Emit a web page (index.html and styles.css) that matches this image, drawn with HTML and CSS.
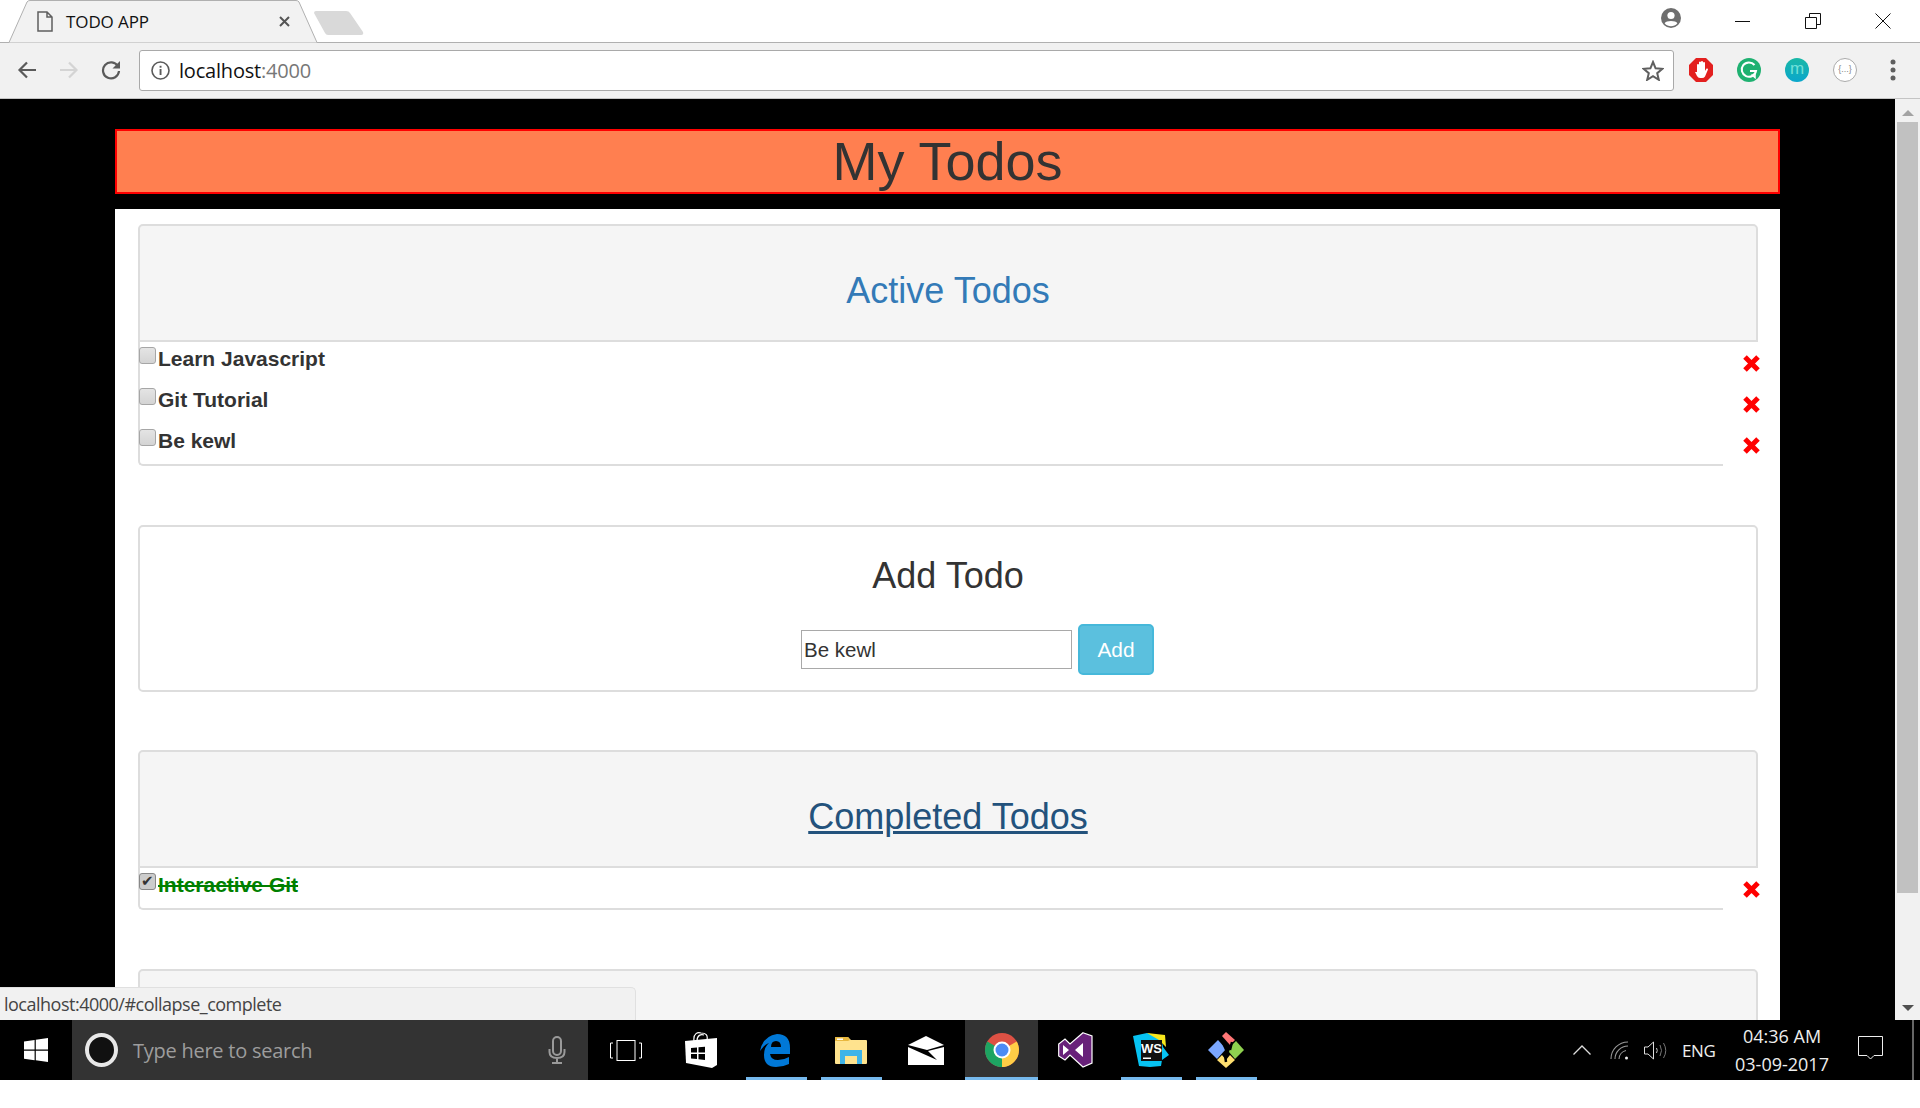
FILE: index.html
```html
<!DOCTYPE html>
<html lang="en">
<head>
    <meta charset="UTF-8">
    <title>TODO APP</title>
    <link rel="stylesheet" href="styles.css">
</head>
<body>
    <!-- browser chrome -->
    <div class="tabstrip">
        <div class="tab">
            <svg class="tab-shape" width="310" height="43" viewBox="0 0 310 43"><path d="M0 42.5H1L19 2Q20 .5 22 .5H288Q290 .5 291 2L309 42.5H310" fill="#f2f2f2" stroke="#b0b0b0"/></svg>
            <svg class="tab-file" width="16" height="21" viewBox="0 0 16 21"><path d="M1 1H10L15 6V20H1Z M10 1V6H15" fill="none" stroke="#5f5f5f" stroke-width="1.5"/></svg>
            <span class="tab-title">TODO APP</span>
            <svg class="tab-close" width="11" height="11" viewBox="0 0 11 11"><path d="M1 1L10 10M10 1L1 10" stroke="#555" stroke-width="2"/></svg>
        </div>
        <svg class="newtab" width="50" height="26" viewBox="0 0 50 26"><path d="M2 1H32Q35 1 36 3L49 22Q50 25 47 25H14Q12 25 11 23L0 3Q0 1 2 1Z" fill="#d9d9d9"/></svg>
        <div class="window-controls">
            <svg class="profile" width="20" height="20" viewBox="0 0 20 20"><circle cx="10" cy="10" r="10" fill="#6e6e6e"/><circle cx="10" cy="7.5" r="3.6" fill="#fff"/><path d="M3.6 15.2C5 12.4 15 12.4 16.4 15.2 14.6 17.4 12.4 18.2 10 18.2S5.400 17.400 3.600 15.200Z" fill="#fff"/></svg>
            <div class="win-btn"><svg width="16" height="16" viewBox="0 0 16 16"><path d="M0 8.500H15" stroke="#111"/></svg></div>
            <div class="win-btn"><svg width="16" height="16" viewBox="0 0 16 16"><path d="M.5 4.500H11.500V15.500H.5Z M4.500 4.500V.5H15.500V11.500H11.500" fill="none" stroke="#111"/></svg></div>
            <div class="win-btn"><svg width="16" height="16" viewBox="0 0 16 16"><path d="M.5 .5L15.500 15.500M15.500 .5L.5 15.500" stroke="#111"/></svg></div>
        </div>
    </div>

    <div class="toolbar">
        <svg class="nav-icon" width="20" height="20" viewBox="0 0 20 20"><path d="M19 10H3M10 2.500L2.500 10L10 17.500" fill="none" stroke="#5a5a5a" stroke-width="2.200"/></svg>
        <svg class="nav-icon" width="20" height="20" viewBox="0 0 20 20"><path d="M1 10H17M10 2.500L17.500 10L10 17.500" fill="none" stroke="#d4d4d4" stroke-width="2.200"/></svg>
        <svg class="nav-icon" width="20" height="20" viewBox="0 0 20 20"><path d="M17 6.500A8 8 0 1 0 18 11" fill="none" stroke="#5a5a5a" stroke-width="2.200"/><path d="M19 1V8.500H11.500Z" fill="#5a5a5a"/></svg>
        <div class="omnibox">
            <svg class="info" width="19" height="19" viewBox="0 0 19 19"><circle cx="9.500" cy="9.500" r="8.500" fill="none" stroke="#5a5a5a" stroke-width="1.600"/><rect x="8.600" y="8" width="1.900" height="6" fill="#5a5a5a"/><rect x="8.600" y="4.800" width="1.900" height="1.900" fill="#5a5a5a"/></svg>
            <span class="url">localhost<span class="url-port">:4000</span></span>
            <svg class="star" width="22" height="21" viewBox="0 0 22 21"><path d="M11 2L13.600 8.300L20.400 8.800L15.200 13.200L16.800 19.800L11 16.200L5.200 19.800L6.800 13.200L1.600 8.800L8.400 8.300Z" fill="none" stroke="#5f5f5f" stroke-width="2"/></svg>
        </div>
        <div class="ext">
            <svg width="24" height="24" viewBox="0 0 24 24"><path d="M7 0H17L24 7V17L17 24H7L0 17V7Z" fill="#e3201f"/><path d="M8 14V6.500Q9 5.500 10 6.500V4Q11 3 12 4V3.500Q13 2.500 14 3.500V4.500Q15 3.500 16 4.500V13L17.500 10.500Q19 10 19 11.500L16 18.500Q15 20 13 20H11Q9 20 8 18L6 14Z" fill="#fff"/></svg>
        </div>
        <div class="ext">
            <svg width="24" height="24" viewBox="0 0 24 24"><circle cx="12" cy="12" r="12" fill="#1fb171"/><path d="M17.500 7A7.200 7.200 0 1 0 19 13H13" fill="none" stroke="#fff" stroke-width="2"/><path d="M14.500 16.500L18 19.500V15.500" fill="none" stroke="#fff" stroke-width="1.500"/></svg>
        </div>
        <div class="ext"><span class="ext-m">m</span></div>
        <div class="ext"><span class="ext-json">{...}</span></div>
        <div class="ext">
            <svg width="6" height="22" viewBox="0 0 6 22"><circle cx="3" cy="3" r="2.500" fill="#5f5f5f"/><circle cx="3" cy="11" r="2.500" fill="#5f5f5f"/><circle cx="3" cy="19" r="2.500" fill="#5f5f5f"/></svg>
        </div>
    </div>

    <!-- page -->
    <div class="viewport">
        <div class="page">
            <h1 class="app-title">My Todos</h1>
            <div class="wrapper">
                <section class="panel">
                    <div class="panel-heading">
                        <h3 class="panel-title"><a href="#collapse_active">Active Todos</a></h3>
                    </div>
                    <ul class="todo-list">
                        <li class="todo-row">
                            <label class="todo-label"><input type="checkbox" class="todo-check"><span>Learn Javascript</span></label>
                            <svg class="remove" width="17" height="17" viewBox="0 0 17 17"><path d="M2 2L15 15M15 2L2 15" stroke="#f00" stroke-width="5"/></svg>
                        </li>
                        <li class="todo-row">
                            <label class="todo-label"><input type="checkbox" class="todo-check"><span>Git Tutorial</span></label>
                            <svg class="remove" width="17" height="17" viewBox="0 0 17 17"><path d="M2 2L15 15M15 2L2 15" stroke="#f00" stroke-width="5"/></svg>
                        </li>
                        <li class="todo-row">
                            <label class="todo-label"><input type="checkbox" class="todo-check"><span>Be kewl</span></label>
                            <svg class="remove" width="17" height="17" viewBox="0 0 17 17"><path d="M2 2L15 15M15 2L2 15" stroke="#f00" stroke-width="5"/></svg>
                        </li>
                    </ul>
                </section>

                <section class="panel add-panel">
                    <h3 class="add-title">Add Todo</h3>
                    <form class="add-form">
                        <input type="text" class="add-input" value="Be kewl">
                        <button type="button" class="add-btn">Add</button>
                    </form>
                </section>

                <section class="panel">
                    <div class="panel-heading">
                        <h3 class="panel-title"><a href="#collapse_complete" class="hovered">Completed Todos</a></h3>
                    </div>
                    <ul class="todo-list">
                        <li class="todo-row done">
                            <label class="todo-label"><input type="checkbox" class="todo-check" checked><span>Interactive Git</span></label>
                            <svg class="remove" width="17" height="17" viewBox="0 0 17 17"><path d="M2 2L15 15M15 2L2 15" stroke="#f00" stroke-width="5"/></svg>
                        </li>
                    </ul>
                </section>

                <section class="panel">
                    <div class="panel-heading"></div>
                </section>
            </div>
        </div>
        <div class="scrollbar">
            <span class="arrow-up"></span>
            <div class="thumb"></div>
            <span class="arrow-down"></span>
        </div>
        <div class="status-bubble">localhost:4000/#collapse_complete</div>
    </div>

    <!-- windows taskbar -->
    <div class="taskbar">
        <div class="start">
            <svg width="24" height="24" viewBox="0 0 24 24"><path d="M0 3.400L10.600 2V11.500H0Z M11.800 1.800L24 0V11.500H11.800Z M0 12.700H10.600V22.200L0 20.700Z M11.800 12.700H24V24L11.800 22.300Z" fill="#fff"/></svg>
        </div>
        <div class="search">
            <span class="cortana"></span>
            <span class="search-text">Type here to search</span>
            <svg class="mic" width="18" height="28" viewBox="0 0 18 28"><rect x="5" y="1" width="8" height="18" rx="4" fill="none" stroke="#9a9a9a" stroke-width="2"/><path d="M1.500 13V16Q1.500 22 9 22T16.500 16V13M9 22V26M4 27H14" fill="none" stroke="#9a9a9a" stroke-width="2"/></svg>
        </div>
        <div class="slot">
            <svg width="32" height="21" viewBox="0 0 32 21"><path d="M3 3H.5V18H3M29 3H31.500V18H29" fill="none" stroke="#fff"/><rect x="7" y=".5" width="18" height="20" fill="none" stroke="#fff"/></svg>
        </div>
        <div class="slot">
            <svg width="32" height="36" viewBox="0 0 32 36"><path d="M9 9C8 1 13 0 16 1C21 1 23 3 22 8M12 9C12 3 16 2 19 3" fill="none" stroke="#fff" stroke-width="1.200"/><path d="M0 9L32 6V33L27 36L1 31Z" fill="#fff"/><path d="M6 16L12 15.500V20.500H6Z M13.500 15.300L20 14.700V20.500H13.500Z M6 22H12V27L6 26.500Z M13.500 22H20V28L13.500 27.300Z" fill="#000"/></svg>
        </div>
        <div class="slot open">
            <svg width="31" height="33" viewBox="0 0 31 33"><path d="M30 20H10Q11 26 18 26Q24 26 29 23V30Q23 33 16 33Q4 33 4 21Q4 13 9 9Q5 10 0 17Q3 2 17 0Q30 0 30 14ZM11 13H21Q21 7 16 7Q11 7 11 13Z" fill="#0078d7"/></svg>
        </div>
        <div class="slot open">
            <svg width="32" height="27" viewBox="0 0 32 27"><path d="M1 0H13L16 3H31Q32 3 32 4V26Q32 27 31 27H1Q0 27 0 26V1Q0 0 1 0Z" fill="#ffe38e"/><path d="M0 4H13L15 3L13 0H1Q0 0 0 1Z" fill="#e9b83f"/><rect x="2" y="1.500" width="6" height="1.500" fill="#fff"/><path d="M5 13H27V27H22V19H10V27H5Z" fill="#3fb4e8"/></svg>
        </div>
        <div class="slot">
            <svg width="36" height="29" viewBox="0 0 36 29"><path d="M0 9L18 0L36 9L19 14Z" fill="#fff"/><path d="M0 11L29 24L20 15L36 11V29H0Z" fill="#fff"/></svg>
        </div>
        <div class="slot open active">
            <svg width="34" height="34" viewBox="0 0 34 34"><circle cx="17" cy="17" r="17" fill="#dd5144"/><path d="M17 17L2.300 8.500A17 17 0 0 0 17 34Z" fill="#1da462"/><path d="M17 17L31.700 8.500A17 17 0 0 1 17 34Z" fill="#ffcd46"/><circle cx="17" cy="17" r="8.500" fill="#fff"/><circle cx="17" cy="17" r="6.500" fill="#4c8bf5"/></svg>
        </div>
        <div class="slot">
            <svg width="35" height="36" viewBox="0 0 35 36"><path d="M25 .7L34 4V31L25 35L12 23L7 28L.7 24V12L7 7L12 12Z" fill="#68217a" stroke="#fff" stroke-width="1.200"/><path d="M25 11V25L17 18Z M5 13V23L11 18Z" fill="#fff"/></svg>
        </div>
        <div class="slot open">
            <svg width="36" height="34" viewBox="0 0 36 34"><path d="M0 3L14 0L28 4L30 14L36 22L29 27L28 33L17 34L6 33Z" fill="#07c3f2"/><path d="M14 0L32 2L33 14L26 7Z" fill="#f8e71c"/><rect x="8" y="7" width="21" height="21" fill="#111"/><text x="18.500" y="20" class="ws-text">WS</text><rect x="10" y="24.500" width="8" height="1.500" fill="#fff"/></svg>
        </div>
        <div class="slot open">
            <svg width="36" height="36" viewBox="0 0 36 36"><path d="M14 4L18 0L27 8L22 13Z" fill="#ff7676"/><path d="M0 18L10 8L18 17L9 27Z" fill="#7ba7ff"/><path d="M23 14L28 9L36 18L27 27L21 20Z" fill="#8fd14f"/><path d="M9 28L14 23L18 28L22 23L27 28L18 36Z" fill="#ffdf70"/><path d="M12 4L20 22M17 23L18 30M24 10L22 18" stroke="#000" stroke-width="2.500" fill="none"/></svg>
        </div>
        <div class="tray">
            <svg class="tray-chevron" width="18" height="10" viewBox="0 0 18 10"><path d="M.5 9.500L9 1L17.500 9.500" fill="none" stroke="#ddd" stroke-width="1.300"/></svg>
            <svg class="tray-wifi" width="19" height="19" viewBox="0 0 19 19"><path d="M1 18A17 17 0 0 1 18 1M5 18A13 13 0 0 1 18 5M9 18A9 9 0 0 1 16 9.500" fill="none" stroke="#999" stroke-width="1.100"/><circle cx="16.500" cy="17" r="1.500" fill="#eee"/></svg>
            <svg class="tray-sound" width="23" height="19" viewBox="0 0 23 19"><path d="M.5 6H4L9.500 1V18L4 13H.5Z" fill="none" stroke="#ddd"/><path d="M12.500 7Q14 9.500 12.500 12" fill="none" stroke="#ccc"/><path d="M16 4Q19 9.500 16 15M19.500 2Q24 9.500 19.500 17" fill="none" stroke="#777"/></svg>
            <span class="tray-lang">ENG</span>
            <div class="clock"><span>04:36 AM</span><span>03-09-2017</span></div>
            <svg class="notify" width="25" height="25" viewBox="0 0 25 25"><path d="M.5 .5H24.500V19.500H16L12.500 23L9 19.500H.5Z" fill="none" stroke="#eee"/></svg>
            <span class="show-desktop"></span>
        </div>
    </div>
    <div class="below-shot"></div>
</body>
</html>
```

FILE: styles.css
```css
* {
    box-sizing: border-box;
}

html, body {
    height: 100%;
}

body {
    margin: 0;
    display: flex;
    flex-direction: column;
    height: 1108px;
    overflow: hidden;
    background: #fff;
    font-family: "Liberation Sans", Arial, sans-serif;
    color: #333;
}

/* browser chrome */
.tabstrip {
    display: flex;
    align-items: flex-start;
    height: 43px;
    flex: none;
    background: #fff;
    border-bottom: 1px solid #b0b0b0;
    font-family: "Open Sans", sans-serif;
}

.tab {
    position: relative;
    display: flex;
    align-items: center;
    width: 310px;
    height: 43px;
    margin-left: 8px;
    padding-left: 29px;
}

.tab-shape {
    position: absolute;
    left: 0;
    top: 0;
}

.tab-file,
.tab-title,
.tab-close {
    position: relative;
}

.tab-title {
    margin-left: 13px;
    width: 213px;
    font-size: 17px;
    letter-spacing: -0.1px;
    color: #111;
}

.newtab {
    margin: 10px 0 0 -4px;
}

.window-controls {
    display: flex;
    align-items: center;
    margin-left: auto;
    padding-right: 2px;
}

.profile {
    margin: 0 27px 6px 0;
}

.win-btn {
    display: flex;
    align-items: center;
    justify-content: center;
    width: 70px;
    height: 42px;
}

.toolbar {
    display: flex;
    align-items: center;
    height: 56px;
    flex: none;
    padding: 0 3px 1px 17px;
    background: #f1f1f1;
    border-bottom: 1px solid #c4c4c4;
}

.nav-icon {
    margin-right: 22px;
}

.nav-icon:nth-child(3) {
    margin-right: 18px;
}

.omnibox {
    display: flex;
    align-items: center;
    flex: 1;
    height: 41px;
    margin-right: 3px;
    padding: 0 9px 0 11px;
    background: #fff;
    border: 1px solid #a9a9a9;
    border-radius: 3px;
    font-family: "Open Sans", sans-serif;
}

.url {
    margin-left: 9px;
    font-size: 20px;
    letter-spacing: -0.2px;
    color: #111;
}

.url-port {
    color: #777;
}

.star {
    margin-left: auto;
}

.ext {
    display: flex;
    align-items: center;
    justify-content: center;
    width: 48px;
}

.ext-m {
    display: block;
    width: 24px;
    height: 24px;
    border-radius: 50%;
    background: linear-gradient(#19b8a6, #0aa6cc);
    color: #6fe0d8;
    font-size: 17px;
    line-height: 22px;
    text-align: center;
}

.ext-json {
    display: block;
    width: 24px;
    height: 24px;
    border-radius: 50%;
    background: #fff;
    border: 1px solid #aaa;
    color: #888;
    font-size: 9px;
    line-height: 21px;
    text-align: center;
}

/* page */
.viewport {
    position: relative;
    display: flex;
    flex: none;
    height: 921px;
    overflow: hidden;
    background: #000;
}

.page {
    flex: 1;
    padding: 30px 115px 0;
    overflow: hidden;
}

.app-title {
    height: 65px;
    margin: 0 0 15px;
    background: #ff7f50;
    border: 2px solid #f00;
    font-size: 54px;
    font-weight: normal;
    line-height: 61px;
    text-align: center;
}

.wrapper {
    padding: 15px 22px 60px 23px;
    background: #fff;
}

.panel {
    margin-bottom: 59px;
}

.panel-heading {
    height: 118px;
    padding-top: 44px;
    background: #f5f5f5;
    border: 2px solid #ddd;
    border-radius: 5px 5px 0 0;
}

.panel-title {
    margin: 0;
    font-size: 36px;
    font-weight: normal;
    line-height: 41px;
    text-align: center;
}

.panel-title a {
    color: #337ab7;
    text-decoration: none;
}

.panel-title a.hovered {
    color: #23527c;
    text-decoration: underline;
}

.todo-list {
    width: 1585px;
    margin: 0;
    padding: 0;
    list-style: none;
    border-left: 2px solid #ddd;
    border-bottom: 2px solid #ddd;
    border-radius: 0 0 0 5px;
}

.todo-row {
    display: flex;
    justify-content: space-between;
    height: 41px;
}

.todo-row:last-child {
    height: 40px;
}

.todo-label {
    display: flex;
    align-items: flex-start;
    font-size: 21px;
    font-weight: bold;
    line-height: 24px;
    padding-top: 5px;
}

.todo-check {
    appearance: none;
    position: relative;
    width: 17px;
    height: 17px;
    margin: 0 2px 0 -1px;
    background: linear-gradient(#e4e4e4, #d4d4d4);
    border: 1px solid #a6a6a6;
    border-radius: 3px;
}

.todo-check:checked {
    background: #ccc;
    border-color: #888;
}

.todo-check:checked::after {
    content: "\2714";
    position: absolute;
    left: 1px;
    top: -2px;
    font-family: "DejaVu Sans", sans-serif;
    font-size: 15px;
    line-height: 18px;
    color: #333;
}

.done .todo-label {
    color: #008000;
    text-decoration: line-through;
}

.remove {
    margin: 13px -37px 0 0;
}

.add-panel {
    height: 167px;
    margin-bottom: 58px;
    padding-top: 29px;
    border: 2px solid #ddd;
    border-radius: 5px;
}

.add-title {
    margin: 0 0 28px;
    font-size: 36px;
    font-weight: normal;
    line-height: 40px;
    text-align: center;
}

.add-form {
    display: flex;
    align-items: center;
    justify-content: center;
    gap: 6px;
    padding-left: 59px;
}

.add-input {
    width: 271px;
    height: 39px;
    padding: 0 2px;
    background: #fff;
    border: 1px solid #a9a9a9;
    font-family: inherit;
    font-size: 20.5px;
    color: #333;
}

.add-btn {
    width: 76px;
    height: 51px;
    background: #5bc0de;
    border: 2px solid #46b8da;
    border-radius: 5px;
    font-family: inherit;
    font-size: 20.8px;
    color: #fff;
}

.scrollbar {
    display: flex;
    flex-direction: column;
    align-items: center;
    flex: none;
    width: 25px;
    background: #f1f1f1;
}

.thumb {
    width: 21px;
    height: 771px;
    margin-top: 6px;
    background: #c1c1c1;
}

.arrow-up,
.arrow-down {
    width: 0;
    height: 0;
    border-left: 6px solid transparent;
    border-right: 6px solid transparent;
}

.arrow-up {
    margin-top: 11px;
    border-bottom: 6px solid #a3a3a3;
}

.arrow-down {
    margin-top: auto;
    margin-bottom: 9px;
    border-top: 6px solid #505050;
}

.status-bubble {
    position: absolute;
    left: 0;
    bottom: 0;
    width: 636px;
    height: 33px;
    padding-left: 4px;
    background: #f1f1f1;
    border: 1px solid #e0e0e0;
    border-left: 0;
    border-bottom: 0;
    border-radius: 0 5px 0 0;
    font-family: "Open Sans", sans-serif;
    font-size: 18px;
    letter-spacing: -0.5px;
    line-height: 33px;
    color: #444;
}

/* taskbar */
.taskbar {
    display: flex;
    align-items: center;
    flex: none;
    height: 60px;
    background: #000;
    font-family: "Open Sans", sans-serif;
}

.start {
    display: flex;
    justify-content: center;
    flex: none;
    width: 72px;
}

.search {
    display: flex;
    align-items: center;
    flex: none;
    width: 516px;
    height: 60px;
    padding: 0 22px 0 13px;
    background: #333;
}

.cortana {
    width: 33px;
    height: 34px;
    background: #111;
    border: 4px solid #e8e8e8;
    border-radius: 50%;
}

.search-text {
    margin-left: 15px;
    font-size: 20px;
    letter-spacing: -0.25px;
    color: #9d9d9d;
}

.mic {
    margin-left: auto;
}

.slot {
    display: flex;
    align-items: center;
    justify-content: center;
    flex: none;
    position: relative;
    width: 75px;
    height: 60px;
}

.slot.open::after {
    content: "";
    position: absolute;
    left: 8px;
    right: 6px;
    bottom: 0;
    height: 3px;
    background: #76b9ed;
}

.slot.active {
    background: #333;
    background-clip: content-box;
    padding-left: 2px;
}

.slot.active::after {
    left: 2px;
    right: 0;
}

.ws-text {
    font-family: "Liberation Sans", sans-serif;
    font-size: 13px;
    font-weight: bold;
    fill: #fff;
    text-anchor: middle;
}

.tray {
    display: flex;
    align-items: center;
    flex: none;
    height: 60px;
    padding-left: 310px;
    color: #eee;
}

.tray-chevron {
    margin-right: 19px;
}

.tray-wifi {
    margin-right: 15px;
}

.tray-sound {
    margin-right: 15px;
}

.tray-lang {
    width: 34px;
    font-size: 17px;
    letter-spacing: -0.4px;
}

.clock {
    display: flex;
    flex-direction: column;
    align-items: center;
    flex: none;
    width: 96px;
    margin-left: 18px;
    font-size: 18px;
    line-height: 28px;
}

.notify {
    flex: none;
    margin: 0 0 3px 28px;
}

.show-desktop {
    flex: none;
    width: 2px;
    height: 60px;
    margin-left: 29px;
    background: #666;
}

.below-shot {
    flex: 1;
    background: #fff;
}
```
